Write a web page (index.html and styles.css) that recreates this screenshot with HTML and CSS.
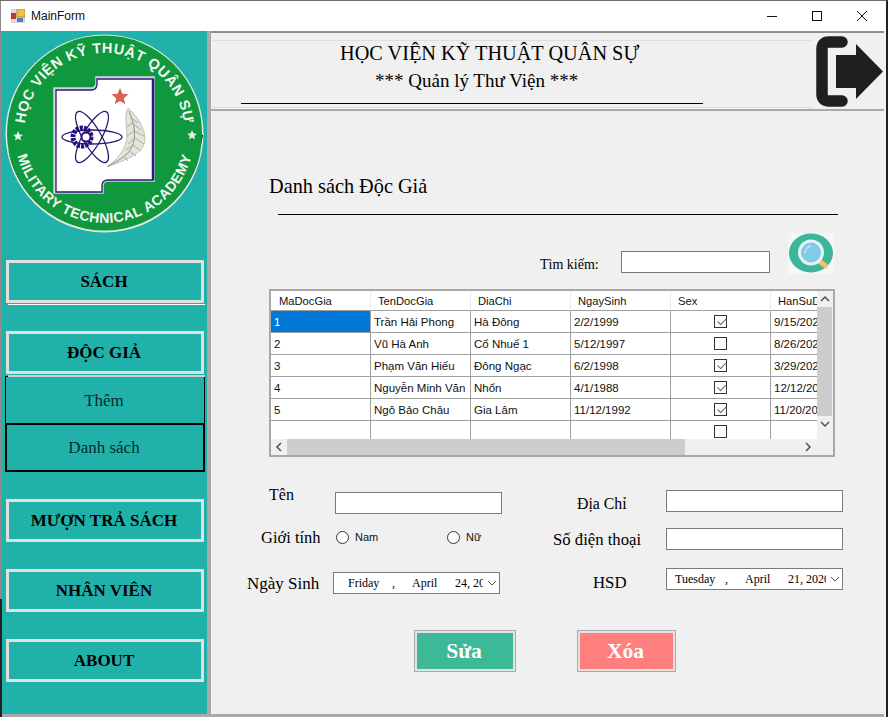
FILE: index.html
```html
<!DOCTYPE html>
<html lang="vi">
<head>
<meta charset="utf-8">
<title>MainForm</title>
<link rel="stylesheet" href="styles.css">
</head>
<body>
<div class="window">
  <div class="titlebar">
    <svg class="app-icon" width="14" height="14" viewBox="0 0 14 14">
      <rect x="0" y="0" width="14" height="14" fill="#d8d8d8"/>
      <rect x="6" y="0" width="8" height="8" fill="#f5c242" stroke="#b98a1e" stroke-width="1"/>
      <rect x="0" y="4" width="5" height="6" fill="#c8342a"/>
      <rect x="6" y="9" width="6" height="4" fill="#4a7fd0"/>
    </svg>
    <span class="app-name">MainForm</span>
    <div class="win-controls">
      <svg width="12" height="12" viewBox="0 0 12 12"><path d="M1 6.5H11" stroke="#111" fill="none"/></svg>
      <svg width="12" height="12" viewBox="0 0 12 12"><rect x="1.5" y="1.5" width="9" height="9" stroke="#111" fill="none"/></svg>
      <svg width="12" height="12" viewBox="0 0 12 12"><path d="M1 1L11 11M11 1L1 11" stroke="#111" fill="none"/></svg>
    </div>
  </div>
  <div class="body">
    <aside class="sidebar">
      <svg class="logo" width="205" height="205" viewBox="0 0 205 205">
        <defs>
          <path id="arcTop" d="M 22.5,102 A 80 80 0 1 1 182.5,102"/>
          <path id="arcBottom" d="M 12.5,102 A 90 90 0 0 0 192.500,102"/>
        </defs>
        <circle cx="102.500" cy="102.500" r="99" fill="#dfeadf"/>
        <path d="M6 118A98 98 0 0 0 199 118A99 99 0 0 1 6 118Z" fill="#111"/>
        <path d="M150 176A99 99 0 0 0 201 104L199 104A97 97 0 0 1 148 175Z" fill="#111"/>
        <circle cx="102.500" cy="102" r="97.500" fill="#0f983e"/>
        <text class="logo-top"><textPath href="#arcTop" startOffset="50%" text-anchor="middle">HỌC VIỆN KỸ THUẬT QUÂN SỰ</textPath></text>
        <text class="logo-bottom"><textPath href="#arcBottom" startOffset="50%" text-anchor="middle">MILITARY TECHNICAL ACADEMY</textPath></text>
        <path d="M16 100l1.500 3.500 3.500.3-2.700 2.200.9 3.500-3.200-1.900-3 1.900.8-3.500-2.700-2.200 3.500-.3z" fill="#e8f4e8"/>
        <path d="M190 99l1.500 3.500 3.500.3-2.700 2.200.9 3.500-3.200-1.900-3 1.900.8-3.500-2.700-2.200 3.500-.3z" fill="#e8f4e8"/>
        <path d="M53 58H89Q95 58 95 52V47H151V149H106Q100 149 100 155V161H53Z" fill="#fff" stroke="#d4d4dc" stroke-width="3.500"/>
        <path d="M54 59H89Q95 59 95 53V48H151V149H106Q100 149 100 155V161H54Z" fill="#fff" stroke="#2b1a7a" stroke-width="1.300"/>
        <path d="M151 48V149" stroke="#2b1a7a" stroke-width="2.500"/>
        <g fill="none" stroke="#2a1a70" stroke-width="1.300">
          <ellipse cx="90" cy="106" rx="30" ry="7"/>
          <ellipse cx="90" cy="106" rx="29" ry="9" transform="rotate(60 90 106)"/>
          <ellipse cx="90" cy="106" rx="29" ry="9" transform="rotate(-60 90 106)"/>
        </g>
        <circle cx="80" cy="106" r="9" fill="none" stroke="#2a0f80" stroke-width="5" stroke-dasharray="3 1"/>
        <circle cx="84" cy="106" r="4.500" fill="#fff" stroke="#2a0f80" stroke-width="2"/>
        <path d="M118 57l2.400 5.700 6.100.5-4.700 4 1.500 6-5.300-3.200-5.300 3.200 1.500-6-4.700-4 6.100-.5z" fill="#d9604c"/>
        <path d="M126 77C135 84 143 98 143 108C143 120 130 127 105 136C116 128 124 118 125 106C125 95 122 85 126 77Z" fill="#e4e4da" stroke="#b4b4a6" stroke-width="0.800"/>
        <path d="M127 80C133 94 136 110 126 122C120 128 112 132 106 135" fill="none" stroke="#8f8f82" stroke-width="1"/>
        <path d="M128 86L136 92M130 92L139 99M132 100L142 105M133 107L142 113M131 114L139 120M127 120L134 125M122 125L126 130M130 92L125 96M132 100L125 105M133 107L126 113M131 114L124 119" fill="none" stroke="#a8a89a" stroke-width="1"/>
      </svg>
      <nav class="nav">
        <button class="nav-btn nav-first underline">SÁCH</button>
        <button class="nav-btn nav-doc underline soft">ĐỘC GIẢ</button>
        <div class="sub-btn sub-thin">Thêm</div>
        <div class="sub-btn sub-thick">Danh sách</div>
        <button class="nav-btn nav-next">MƯỢN TRẢ SÁCH</button>
        <button class="nav-btn nav-next">NHÂN VIÊN</button>
        <button class="nav-btn nav-next">ABOUT</button>
      </nav>
    </aside>
    <main class="main">
      <header class="header">
        <div class="title-box">
          <div class="title-main">HỌC VIỆN KỸ THUẬT QUÂN SỰ</div>
          <div class="title-sub">*** Quản lý Thư Viện ***</div>
          <div class="title-rule"></div>
        </div>
        <svg class="exit-icon" width="68" height="71" viewBox="0 0 68 71">
          <path d="M26 6H13Q6 6 6 13V58Q6 65 13 65H26" fill="none" stroke="#1f1f1f" stroke-width="11.500" stroke-linecap="round" stroke-linejoin="round"/>
          <path d="M20 19H40V8L67 35.500L40 63V52H20Z" fill="#1f1f1f"/>
        </svg>
      </header>
      <section class="content">
        <h2 class="section-title">Danh sách Độc Giả</h2>
        <div class="section-rule"></div>
        <div class="search-row">
          <label class="search-label">Tìm kiếm:</label>
          <div class="textbox search-box"></div>
          <svg class="search-icon" width="46" height="41" viewBox="0 0 46 41">
            <rect width="46" height="41" fill="#f6f6f6"/>
            <ellipse cx="23" cy="20" rx="22" ry="19.500" fill="#3cb59a"/>
            <path d="M30 27L39 34" stroke="#f2c35c" stroke-width="5"/>
            <circle cx="23" cy="19.500" r="13" fill="#e6f2f5"/>
            <circle cx="23" cy="19.500" r="10" fill="#7fcbe8"/>
            <path d="M17 20A7 7 0 0 1 23 13" stroke="#bfe6f4" stroke-width="1.500" fill="none"/>
          </svg>
        </div>
        <div class="grid-view">
          <div class="grid-data">
            <table class="table">
              <thead>
                <tr><th>MaDocGia</th><th>TenDocGia</th><th>DiaChi</th><th>NgaySinh</th><th>Sex</th><th>HanSuDung</th></tr>
              </thead>
              <tbody>
                <tr><td class="selected">1</td><td>Trần Hải Phong</td><td>Hà Đông</td><td>2/2/1999</td><td class="check"><span class="cb on"></span></td><td>9/15/2020</td></tr>
                <tr><td>2</td><td>Vũ Hà Anh</td><td>Cổ Nhuế 1</td><td>5/12/1997</td><td class="check"><span class="cb"></span></td><td>8/26/2020</td></tr>
                <tr><td>3</td><td>Phạm Văn Hiếu</td><td>Đông Ngạc</td><td>6/2/1998</td><td class="check"><span class="cb on"></span></td><td>3/29/2020</td></tr>
                <tr><td>4</td><td>Nguyễn Minh Văn</td><td>Nhổn</td><td>4/1/1988</td><td class="check"><span class="cb on"></span></td><td>12/12/2020</td></tr>
                <tr><td>5</td><td>Ngô Bảo Châu</td><td>Gia Lâm</td><td>11/12/1992</td><td class="check"><span class="cb on"></span></td><td>11/20/2020</td></tr>
                <tr><td></td><td></td><td></td><td></td><td class="check"><span class="cb"></span></td><td></td></tr>
              </tbody>
            </table>
          </div>
          <div class="vscroll">
            <svg width="16" height="16" viewBox="0 0 16 16"><path d="M4 10L8 6L12 10" fill="none" stroke="#505050" stroke-width="1.500"/></svg>
            <div class="vthumb"></div>
            <svg width="16" height="16" viewBox="0 0 16 16"><path d="M4 6L8 10L12 6" fill="none" stroke="#505050" stroke-width="1.500"/></svg>
          </div>
          <div class="hscroll">
            <svg width="16" height="16" viewBox="0 0 16 16"><path d="M10 4L6 8L10 12" fill="none" stroke="#505050" stroke-width="1.500"/></svg>
            <div class="hthumb"></div>
            <svg class="harrow-right" width="16" height="16" viewBox="0 0 16 16"><path d="M6 4L10 8L6 12" fill="none" stroke="#505050" stroke-width="1.500"/></svg>
          </div>
          <div class="corner"></div>
        </div>
        <div class="form">
          <div class="form-col col-left">
            <div class="field f-ten">
              <span class="lbl lbl-ten">Tên</span>
              <div class="textbox box-left"></div>
            </div>
            <div class="field f-gender">
              <span class="lbl lbl-gender">Giới tính</span>
              <span class="radio-item radio-nam"><span class="radio"></span>Nam</span>
              <span class="radio-item"><span class="radio"></span>Nữ</span>
            </div>
            <div class="field f-birth">
              <span class="lbl lbl-birth">Ngày Sinh</span>
              <div class="picker picker-left">
                <span class="pk-day">Friday</span><span class="pk-comma">,</span><span class="pk-month">April</span><span class="pk-date">24, 2020</span>
                <svg class="pk-chev" width="10" height="6" viewBox="0 0 10 6"><path d="M1 1L5 5L9 1" fill="none" stroke="#555"/></svg>
              </div>
            </div>
          </div>
          <div class="form-col col-right">
            <div class="field">
              <span class="lbl lbl-addr">Địa Chỉ</span>
              <div class="textbox box-right"></div>
            </div>
            <div class="field f-phone">
              <span class="lbl lbl-phone">Số điện thoại</span>
              <div class="textbox box-right"></div>
            </div>
            <div class="field f-hsd">
              <span class="lbl lbl-hsd">HSD</span>
              <div class="picker picker-right">
                <span class="pk-day2">Tuesday</span><span class="pk-comma2">,</span><span class="pk-month2">April</span><span class="pk-date2">21, 2020</span>
                <svg class="pk-chev" width="10" height="6" viewBox="0 0 10 6"><path d="M1 1L5 5L9 1" fill="none" stroke="#555"/></svg>
              </div>
            </div>
          </div>
        </div>
        <div class="actions">
          <button class="action action-edit">Sửa</button>
          <button class="action action-del">Xóa</button>
        </div>
      </section>
      <div class="main-bottom"></div>
    </main>
  </div>
</div>
</body>
</html>
```

FILE: styles.css
```css
* { box-sizing: border-box; }
html, body { margin: 0; padding: 0; }
body { width: 888px; height: 717px; overflow: hidden; background: #222; font-family: "Liberation Serif", serif; color: #000; }

.window { width: 888px; height: 717px; display: flex; flex-direction: column; border-top: 1px solid #6e6e6e; border-right: 2px solid #222; background: linear-gradient(#8a8a8a 598px, #222 598px); }

.titlebar { height: 30px; flex: none; display: flex; align-items: center; background: #fff; padding-left: 10px; margin-left: 1px; }
.app-icon { flex: none; }
.app-name { font-family: "Liberation Sans", sans-serif; font-size: 12px; margin-left: 6px; color: #111; }
.win-controls { margin-left: auto; display: flex; gap: 33px; padding-right: 18px; }

.body { flex: 1; display: flex; min-height: 0; margin-left: 2px; }

.sidebar { width: 209px; flex: none; background: #20b2aa; border-right: 4px solid #a9a9a9; border-bottom: 3px solid #a9a9a9; display: flex; flex-direction: column; }
.logo { display: block; flex: none; }
.logo-top { font: bold 14.5px "Liberation Sans", sans-serif; fill: #f2f7f2; letter-spacing: 0.5px; }
.logo-bottom { font: bold 14px "Liberation Sans", sans-serif; fill: #f2f7f2; letter-spacing: 0.5px; }

.nav { display: flex; flex-direction: column; padding-left: 4px; }
.nav-btn { position: relative; display: block; width: 198px; height: 43px; background: #20b2aa; border: 3px solid #e0e0e0; font: bold 17px "Liberation Serif", serif; color: #000; padding: 0 2px 0 0; text-align: center; }
.nav-first { margin-top: 24px; }
.nav-doc { margin-top: 28px; }
.nav-next { margin-top: 27px; }
.underline::after { content: ""; position: absolute; left: -1px; right: -4px; bottom: -5px; height: 1px; background: #fff; }
.underline.soft::after { background: #cfcfcf; height: 2px; bottom: -6px; }
.sub-btn { width: 200px; margin-left: -1px; background: #20b2aa; display: flex; align-items: center; justify-content: center; font-size: 17px; color: #032c2a; padding-right: 2px; }
.sub-thin { height: 48px; margin-top: 2px; border: 1px solid #000; padding-top: 1px; }
.sub-thick { height: 49px; margin-top: -1px; border: 2px solid #000; }

.main { flex: 1; display: flex; flex-direction: column; background: #f0f0f0; min-width: 0; }
.header { height: 80px; flex: none; display: flex; align-items: flex-start; border-top: 2px solid #8c8c8c; border-bottom: 2px solid #a9a9a9; margin-right: 2px; }
.title-box { width: 600px; margin-left: 1px; margin-top: 7px; height: 68px; border-top: 1px solid #dedede; border-bottom: 1px solid #dedede; flex: none; display: flex; flex-direction: column; }
.title-main { font-size: 20.3px; line-height: 24px; margin-left: 128px; white-space: nowrap; }
.title-sub { font-size: 19px; line-height: 24px; margin-top: 4px; margin-left: 163px; white-space: nowrap; }
.title-rule { width: 462px; height: 1px; background: #000; margin-left: 29px; margin-top: 10px; flex: none; }
.exit-icon { margin-left: 4px; margin-top: 3px; flex: none; }

.content { flex: 1; padding-left: 36px; min-height: 0; }
.section-title { font-size: 20.3px; font-weight: normal; line-height: 24px; margin: 63px 0 0 22px; }
.section-rule { width: 560px; height: 1px; background: #000; margin: 16px 0 0 31px; }
.search-row { display: flex; align-items: flex-end; margin: 18px 0 0 293px; height: 41px; }
.search-label { font-size: 14px; line-height: 16px; width: 81px; flex: none; padding-bottom: 1px; }
.textbox { background: #fff; border: 1px solid #7a7a7a; height: 22px; }
.search-box { width: 149px; margin-bottom: 1px; }
.search-icon { margin-left: 18px; flex: none; }

.grid-view { margin: 15px 0 0 22px; width: 566px; height: 168px; border: 2px solid #a8a8a8; background: #f0f0f0; display: grid; grid-template-columns: 546px 16px; grid-template-rows: 148px 16px; }
.grid-data { overflow: hidden; background: #fff; }
.table { border-collapse: separate; border-spacing: 0; table-layout: fixed; width: 600px; font-family: "Liberation Sans", sans-serif; font-size: 11.5px; color: #111; }
.table th { width: 100px; height: 20px; font-weight: normal; font-size: 11.2px; text-align: left; padding: 0 0 0 7px; background: #fff; border-right: 1px solid #ececec; border-bottom: 1px solid #a0a0a0; white-space: nowrap; overflow: hidden; }
.table th:first-child { padding-left: 8px; }
.table td { width: 100px; height: 22px; padding: 0 0 0 3px; background: #fff; border-right: 1px solid #a0a0a0; border-bottom: 1px solid #a0a0a0; white-space: nowrap; overflow: hidden; }
.table td.selected { background: #0078d7; color: #fff; }
.table td.check { text-align: center; padding: 0; }
.cb { display: inline-block; position: relative; width: 13px; height: 13px; border: 1px solid #333; background: #fff; vertical-align: middle; }
.cb.on::after { content: ""; position: absolute; left: 2px; top: 0px; width: 7px; height: 4px; border-left: 1.5px solid #666; border-bottom: 1.5px solid #666; transform: rotate(-45deg) translate(-1px, 2px); }

.vscroll { display: flex; flex-direction: column; align-items: stretch; background: #f0f0f0; }
.vthumb { height: 109px; background: #cdcdcd; margin-right: 1px; }
.hscroll { display: flex; align-items: center; background: #f0f0f0; }
.hthumb { width: 398px; height: 16px; background: #cdcdcd; }
.harrow-right { margin-left: auto; margin-right: 1px; }
.corner { background: #f0f0f0; }

.form { display: flex; margin-top: 33px; }
.form-col { display: flex; flex-direction: column; flex: none; }
.col-left { width: 306px; }
.field { display: flex; align-items: center; height: 22px; }
.f-ten { margin-top: 2px; }
.f-gender { margin-top: 12px; }
.f-birth { margin-top: 24px; }
.f-phone { margin-top: 16px; }
.f-hsd { margin-top: 18px; }
.lbl { font-size: 16.5px; white-space: nowrap; flex: none; }
.lbl-ten { width: 88px; padding-left: 22px; font-size: 16px; margin-top: -16px; }
.lbl-gender { width: 89px; padding-left: 14px; margin-top: 2px; }
.lbl-birth { width: 86px; padding-left: 0; font-size: 17px; margin-top: 2px; }
.lbl-addr { width: 113px; padding-left: 24px; font-size: 15.8px; margin-top: 6px; }
.lbl-phone { width: 113px; font-size: 16.7px; margin-top: 2px; }
.lbl-hsd { width: 113px; padding-left: 40px; font-size: 16.8px; margin-top: 8px; }
.box-left { width: 167px; }
.box-right { width: 177px; }
.radio-item { display: flex; align-items: center; font-family: "Liberation Sans", sans-serif; font-size: 11px; color: #111; flex: none; }
.radio-nam { width: 111px; }
.radio { width: 13px; height: 13px; border: 1px solid #333; border-radius: 50%; background: #fff; margin-right: 6px; flex: none; }
.picker { display: flex; align-items: center; background: #fff; border: 1px solid #7a7a7a; height: 22px; font-size: 12px; white-space: nowrap; overflow: hidden; flex: none; }
.picker-left { width: 167px; }
.picker-right { width: 177px; }
.pk-day { margin-left: 14px; width: 44px; flex: none; }
.pk-comma { width: 20px; flex: none; }
.pk-month { width: 43px; flex: none; }
.pk-date { width: 28px; overflow: hidden; flex: none; }
.pk-day2 { margin-left: 8px; width: 50px; flex: none; }
.pk-comma2 { width: 20px; flex: none; }
.pk-month2 { width: 43px; flex: none; }
.pk-date2 { width: 38px; overflow: hidden; flex: none; }
.pk-chev { margin-left: 4px; flex: none; }

.actions { display: flex; gap: 61px; margin: 36px 0 0 167px; }
.action { height: 42px; border: 1px solid #ababab; outline: 2px solid #e2e2e2; outline-offset: -3px; font: bold 21.5px "Liberation Serif", serif; color: #fff; padding: 0 2px 0 0; }
.action-edit { width: 102px; background: #3cba98; }
.action-del { width: 99px; background: #ff7f7f; }

.main-bottom { height: 3px; flex: none; background: #a9a9a9; margin-right: 2px; }
```
